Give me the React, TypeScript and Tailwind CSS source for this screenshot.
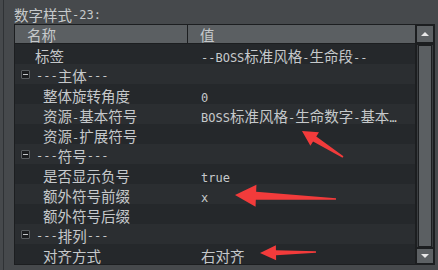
import { Fragment } from 'react';

/* property grid: 数字样式 */

type Row =
  | { kind: 'item'; name: string; value: string; top?: boolean }
  | { kind: 'group'; name: string };

const rows: Row[] = [
  { kind: 'item', name: '标签', value: '--BOSS标准风格-生命段--', top: true },
  { kind: 'group', name: '---主体---' },
  { kind: 'item', name: '整体旋转角度', value: '0' },
  { kind: 'item', name: '资源-基本符号', value: 'BOSS标准风格-生命数字-基本…' },
  { kind: 'item', name: '资源-扩展符号', value: '' },
  { kind: 'group', name: '---符号---' },
  { kind: 'item', name: '是否显示负号', value: 'true' },
  { kind: 'item', name: '额外符号前缀', value: 'x' },
  { kind: 'item', name: '额外符号后缀', value: '' },
  { kind: 'group', name: '---排列---' },
  { kind: 'item', name: '对齐方式', value: '右对齐' },
];

// cjk runs get the cjk size, the rest a narrow mono
const Txt = ({ s, tight }: { s: string; tight?: boolean }) => {
  const parts = s.split(/([\u3000-\u9fff\uff00-\uffef]+)/).filter(Boolean);
  const lh = tight ? 'leading-[16px]' : 'leading-[18px]';
  return (
    <>
      {parts.map((p, i) =>
        /[\u3000-\u9fff\uff00-\uffef]/.test(p) ? (
          <span key={i} className={`font-['Noto_Sans_CJK_SC',sans-serif] text-[14.5px] ${lh}`}>
            {p}
          </span>
        ) : (
          <span key={i} className={`font-['DejaVu_Sans_Mono','Noto_Sans_CJK_SC',monospace] text-[12px] ${lh}`}>
            {p}
          </span>
        )
      )}
    </>
  );
};

// red annotation arrow, tip -> tail
const arrowPts = (tx: number, ty: number, ex: number, ey: number, head: number, hw: number, sw: number) => {
  const dx = ex - tx;
  const dy = ey - ty;
  const len = Math.hypot(dx, dy);
  const ux = dx / len;
  const uy = dy / len;
  const px = -uy;
  const py = ux;
  const bx = tx + ux * head;
  const by = ty + uy * head;
  const pts = [
    [tx, ty],
    [bx + px * hw, by + py * hw],
    [bx + px * sw, by + py * sw],
    [ex + px * 0.8, ey + py * 0.8],
    [ex - px * 0.8, ey - py * 0.8],
    [bx - px * sw, by - py * sw],
    [bx - px * hw, by - py * hw],
  ];
  return pts.map((p) => p.join(',')).join(' ');
};

export default function App() {
  return (
    <div className="relative w-[438px] h-[270px] bg-[#46494c] overflow-hidden text-[#c6c9cb]">
      <div className="flex h-full">
        <div className="w-[3px]" />
        <div className="w-[1px] bg-[#2f3235]" />
        <div className="flex flex-col pl-[10px] pt-[7px]">
          {/* title */}
          <div className="h-[17px] flex items-start whitespace-nowrap">
            <Txt s="数字样式-23:" tight />
          </div>

          {/* table */}
          <div className="flex w-[421px] h-[241px] border border-[#1c1e20] bg-[#1c1e20]">
            <div className="flex flex-col w-[400px]">
              <div className="flex h-[19px] bg-[#5b5f62] border-b border-[#1c1e20]">
                <div className="w-[173px] flex items-center pl-[12px] pt-[1px] border-r border-[#1c1e20]">
                  <Txt s="名称" tight />
                </div>
                <div className="flex-1 flex items-center pl-[12px] pt-[1px]">
                  <Txt s="值" tight />
                </div>
              </div>
              {rows.map((r, i) => (
                <div
                  key={i}
                  className={`flex h-[20px] items-center whitespace-nowrap pt-[3px] ${
                    i % 2 === 0 ? 'bg-[#25282b]' : 'bg-[#2b2e31]'
                  }`}
                >
                  {r.kind === 'group' ? (
                    <Fragment>
                      <div className="ml-[6px] mr-[6px] -mt-[3px] w-[9px] h-[9px] border border-[#5a5e61] bg-[#1b1d1f] rounded-[1px] flex items-center justify-center">
                        <div className="w-[5px] h-[1px] bg-[#c4c7c9]" />
                      </div>
                      <Txt s={r.name} />
                    </Fragment>
                  ) : (
                    <Fragment>
                      <div className={`w-[174px] ${r.top ? 'pl-[20px]' : 'pl-[28px]'}`}>
                        <Txt s={r.name} />
                      </div>
                      <div className="pl-[12px] w-[226px]">
                        <Txt s={r.value} />
                      </div>
                    </Fragment>
                  )}
                </div>
              ))}
            </div>

            {/* scrollbar */}
            <div className="flex flex-col w-[19px] pl-[1px] bg-[#1c1e20]">
              <div className="h-[18px] bg-[#5d6164] border border-[#1c1e20] flex items-center justify-center">
                <div className="w-0 h-0 border-l-[4px] border-r-[4px] border-b-[4px] border-l-transparent border-r-transparent border-b-[#e8e8e8]" />
              </div>
              <div className="flex-1 mt-[1px] px-[1px] bg-[#3a3d40] border border-[#1c1e20]">
                <div className="h-full bg-[#5b5f62] border border-[#1c1e20]" />
              </div>
              <div className="h-[16px] bg-[#5d6164] border border-[#1c1e20] flex items-center justify-center">
                <div className="w-0 h-0 border-l-[4px] border-r-[4px] border-t-[4px] border-l-transparent border-r-transparent border-t-[#e8e8e8]" />
              </div>
            </div>
          </div>
        </div>
      </div>

      {/* annotations */}
      <svg className="absolute inset-0 pointer-events-none" width={438} height={270}>
        <polygon points={arrowPts(302, 131, 343, 157, 15, 8, 3)} fill="#f23b3b" />
        <polygon points={arrowPts(235, 195, 336, 199, 21, 11, 4)} fill="#f23b3b" />
        <polygon points={arrowPts(260, 253, 316, 252, 16, 7.5, 2.5)} fill="#f23b3b" />
      </svg>
    </div>
  );
}
